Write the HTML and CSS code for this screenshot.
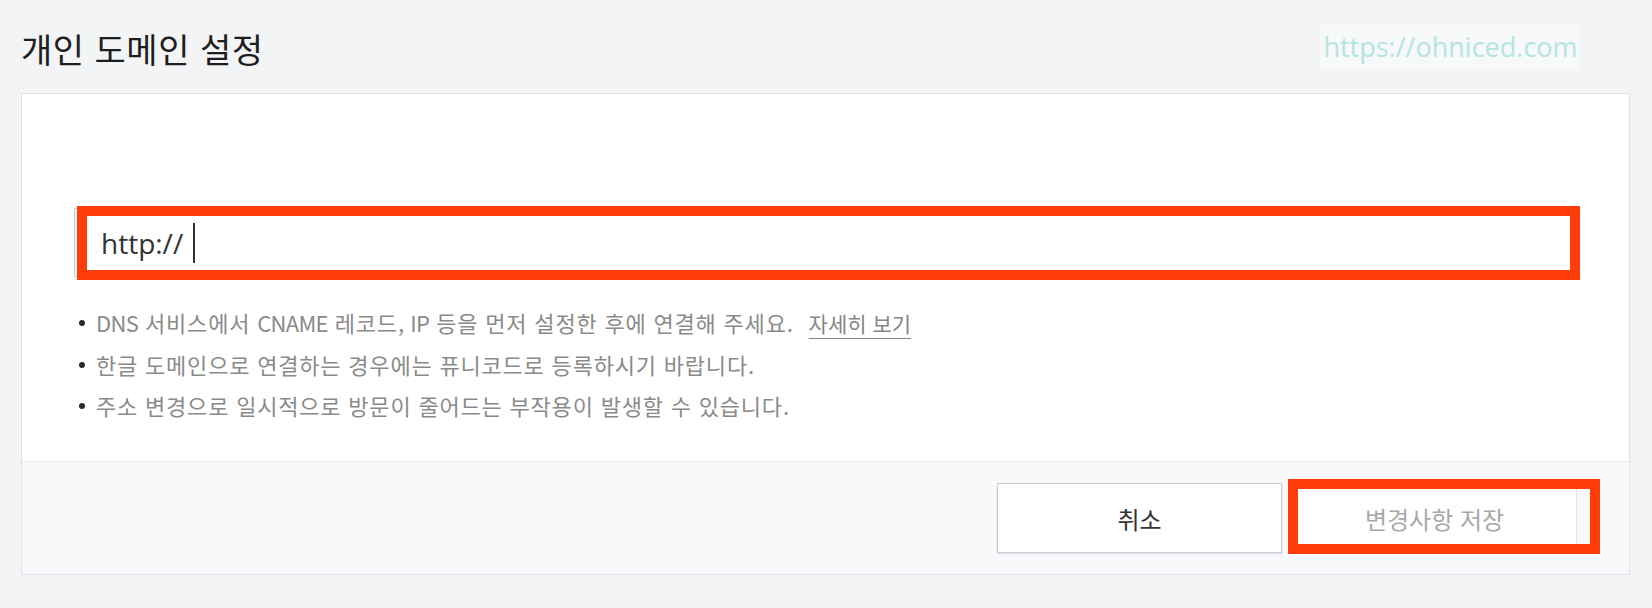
FILE: index.html
```html
<!DOCTYPE html>
<html lang="ko">
<head>
<meta charset="utf-8">
<title>개인 도메인 설정</title>
<link rel="stylesheet" href="styles.css">
</head>
<body>
<div class="page">
  <div class="watermark">https://ohniced.com</div>
  <header class="header">
    <h1 class="title">개인 도메인 설정</h1>
  </header>
  <section class="card">
    <div class="card-body">
      <div class="input-wrap">
        <div class="input"><span class="input-text">http://</span><span class="caret"></span></div>
        <div class="annot annot-input"></div>
      </div>
      <ul class="notes">
        <li><span class="en">DNS</span> 서비스에서 <span class="en">CNAME</span> 레코드<span class="en">,</span> <span class="en">IP</span> 등을 먼저 설정한 후에 연결해 주세요. <a class="more" href="#">자세히 보기</a></li>
        <li>한글 도메인으로 연결하는 경우에는 퓨니코드로 등록하시기 바랍니다.</li>
        <li>주소 변경으로 일시적으로 방문이 줄어드는 부작용이 발생할 수 있습니다.</li>
      </ul>
    </div>
    <div class="card-footer">
      <button class="btn btn-cancel" type="button">취소</button>
      <div class="save-wrap">
        <button class="btn btn-save" type="button" disabled>변경사항 저장</button>
        <div class="annot annot-save"></div>
      </div>
    </div>
  </section>
</div>
</body>
</html>
```

FILE: styles.css
```css
html, body {
  margin: 0;
  padding: 0;
}
body {
  background: #f3f4f6;
  font-family: "Noto Sans CJK KR", "Noto Sans", sans-serif;
  color: #222;
}
.page {
  position: relative;
  padding: 0 22px 0 21px;
  height: 608px;
  box-sizing: border-box;
}
.watermark {
  position: absolute;
  left: 1320px;
  top: 24px;
  width: 261px;
  height: 46px;
  background: #f7f8fa;
  color: #b2e6dd;
  font-family: "Open Sans", sans-serif;
  font-size: 27px;
  line-height: 46px;
  text-align: center;
  white-space: nowrap;
}
.header {
  height: 93px;
  display: flex;
  align-items: center;
  padding-top: 4px;
  box-sizing: border-box;
}
.title {
  margin: 0;
  font-size: 34px;
  font-weight: 400;
  color: #1e1e1e;
  letter-spacing: 0.5px;
}
.card {
  background: #fff;
  border: 1px solid #dfe2e8;
}
.card-body {
  padding: 114px 49px 35px 52px;
}
.input-wrap {
  position: relative;
}
.input {
  height: 69px;
  border: 1px solid #c9c9c9;
  box-sizing: border-box;
  display: flex;
  align-items: center;
  padding-left: 26px;
}
.input-text {
  font-family: "Open Sans", sans-serif;
  font-size: 28px;
  color: #333;
}
.caret {
  width: 2px;
  height: 40px;
  background: #333;
  margin-left: 10px;
}
.annot {
  position: absolute;
  border: 10px solid #ff3c0a;
  box-sizing: border-box;
  pointer-events: none;
}
.annot-input {
  left: 3px;
  top: -2px;
  right: 0;
  bottom: -3px;
}
.notes {
  list-style: none;
  margin: 25px 0 0 0;
  padding: 0;
}
.notes li {
  position: relative;
  padding-left: 22px;
  font-size: 22px;
  line-height: 41px;
  color: #8a8a8a;
  letter-spacing: 0.8px;
}
.notes li::before {
  content: "";
  position: absolute;
  left: 5px;
  top: 18px;
  width: 6px;
  height: 6px;
  border-radius: 50%;
  background: #2a2a2a;
}
.en {
  letter-spacing: -0.7px;
}
.more {
  color: #858585;
  font-size: 21px;
  letter-spacing: 0;
  text-decoration: underline;
  text-decoration-thickness: 1px;
  text-underline-offset: 6px;
  margin-left: 8px;
}
.card-footer {
  background: #f8f9fb;
  border-top: 1px solid #e9ebf0;
  height: 113px;
  box-sizing: border-box;
  display: flex;
  justify-content: flex-end;
  align-items: center;
  gap: 10px;
  padding: 0 52px 0 0;
}
.btn {
  width: 285px;
  height: 70px;
  background: #fff;
  border: 1px solid #c9cdd6;
  font-family: "Noto Sans CJK KR", sans-serif;
  font-size: 24px;
  color: #333;
  padding: 0;
  cursor: pointer;
}
.btn-cancel {
  box-shadow: 0 1px 2px rgba(0, 0, 0, 0.12);
}
.save-wrap {
  position: relative;
}
.btn-save {
  display: block;
  border-color: #e2e4e8;
  color: #a8a8a8;
}
.annot-save {
  left: -4px;
  top: -4px;
  right: -23px;
  bottom: -1px;
}
```
